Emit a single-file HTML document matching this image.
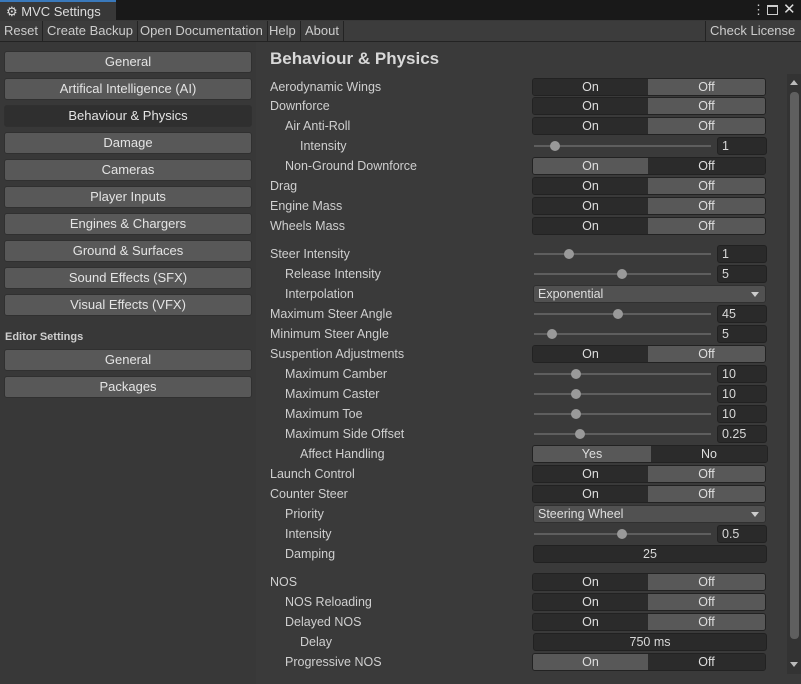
<!DOCTYPE html>
<html><head><meta charset="utf-8"><style>
*{box-sizing:border-box;margin:0;padding:0}
body{width:801px;height:684px;background:#383838;font-family:"Liberation Sans",sans-serif;font-size:12px;color:#d2d2d2;position:relative;overflow:hidden}
.a{position:absolute}
.tb{left:0;top:0;width:801px;height:20px;background:#191919}
.tab{left:0;top:0;width:116px;height:21px;background:#383838;border-top:2px solid #3a79bb;font-size:13px;color:#ddd;padding:2px 0 0 6px}
.menu{left:0;top:21px;width:801px;height:21px;background:#3c3c3c;border-bottom:1px solid #232323}
.mi{position:absolute;top:0;height:20px;line-height:20px;font-size:13px;color:#ccc;border-right:1px solid #232323;padding:0 4px}
.lb{position:absolute;left:4px;width:248px;height:22px;background:#585858;border:1px solid #303030;border-radius:3px;text-align:center;line-height:20px;font-size:13px;color:#e4e4e4}
.lb.sel{background:#2f2f2f}
.lab{position:absolute;height:20px;line-height:20px;font-size:12.5px;color:#cfcfcf}
.tg{position:absolute;left:532px;width:234px;height:18px;border:1px solid #222;border-radius:3px;overflow:hidden;display:flex}
.tg div{height:16px;line-height:16px;text-align:center;font-size:12.5px;color:#dedede}
.d{background:#2b2b2b}.l{background:#585858}
.tr{position:absolute;left:534px;width:177px;height:2px;background:#5e5e5e}
.hd{position:absolute;width:10px;height:10px;border-radius:5px;background:#999}
.fd{position:absolute;left:717px;width:50px;height:18px;background:#2a2a2a;border:1px solid #212121;border-radius:3px;line-height:16px;padding-left:4px;font-size:12.5px;color:#d8d8d8}
.dd{position:absolute;left:533px;width:233px;height:18px;background:#515151;border:1px solid #303030;border-radius:3px;line-height:16px;padding-left:4px;font-size:12.5px;color:#dedede}
.dd:after{content:"";position:absolute;right:6px;top:6px;border-left:4px solid transparent;border-right:4px solid transparent;border-top:5px solid #ccc}
.wf{position:absolute;left:533px;width:234px;height:18px;background:#2a2a2a;border:1px solid #212121;border-radius:3px;text-align:center;line-height:16px;font-size:12.5px;color:#d8d8d8}
</style></head><body>
<div class="a tb"></div>
<div class="a tab">⚙ MVC Settings</div>
<div class="a" style="left:752px;top:2px;color:#ccc;font-size:13px">⋮</div>
<div class="a" style="left:767px;top:5px;width:11px;height:10px;border:1px solid #ccc;border-top-width:2px"></div>
<div class="a" style="left:783px;top:0px;color:#ddd;font-size:15px">✕</div>
<div class="a menu">
<div class="mi" style="left:0">Reset</div>
<div class="mi" style="left:43px">Create Backup</div>
<div class="mi" style="left:136px">Open Documentation</div>
<div class="mi" style="left:265px">Help</div>
<div class="mi" style="left:301px">About</div>
<div class="mi" style="left:705px;border-left:1px solid #232323;border-right:none">Check License</div>
</div>
<div class="a" style="left:256px;top:42px;width:545px;height:642px;background:#3a3a3a"></div>

<div class="lb" style="top:51px">General</div>
<div class="lb" style="top:78px">Artifical Intelligence (AI)</div>
<div class="lb sel" style="top:105px">Behaviour &amp; Physics</div>
<div class="lb" style="top:132px">Damage</div>
<div class="lb" style="top:159px">Cameras</div>
<div class="lb" style="top:186px">Player Inputs</div>
<div class="lb" style="top:213px">Engines &amp; Chargers</div>
<div class="lb" style="top:240px">Ground &amp; Surfaces</div>
<div class="lb" style="top:267px">Sound Effects (SFX)</div>
<div class="lb" style="top:294px">Visual Effects (VFX)</div>
<div class="a" style="left:5px;top:331px;font-size:11px;font-weight:bold;color:#cfcfcf">Editor Settings</div>
<div class="lb" style="top:349px">General</div>
<div class="lb" style="top:376px">Packages</div>

<div class="a" style="left:270px;top:49px;font-size:17px;font-weight:bold;color:#d8d8d8">Behaviour &amp; Physics</div>

<div class="lab" style="left:270px;top:77px">Aerodynamic Wings</div>
<div class="lab" style="left:270px;top:96px">Downforce</div>
<div class="lab" style="left:285px;top:116px">Air Anti-Roll</div>
<div class="lab" style="left:300px;top:136px">Intensity</div>
<div class="lab" style="left:285px;top:156px">Non-Ground Downforce</div>
<div class="lab" style="left:270px;top:176px">Drag</div>
<div class="lab" style="left:270px;top:196px">Engine Mass</div>
<div class="lab" style="left:270px;top:216px">Wheels Mass</div>
<div class="lab" style="left:270px;top:244px">Steer Intensity</div>
<div class="lab" style="left:285px;top:264px">Release Intensity</div>
<div class="lab" style="left:285px;top:284px">Interpolation</div>
<div class="lab" style="left:270px;top:304px">Maximum Steer Angle</div>
<div class="lab" style="left:270px;top:324px">Minimum Steer Angle</div>
<div class="lab" style="left:270px;top:344px">Suspention Adjustments</div>
<div class="lab" style="left:285px;top:364px">Maximum Camber</div>
<div class="lab" style="left:285px;top:384px">Maximum Caster</div>
<div class="lab" style="left:285px;top:404px">Maximum Toe</div>
<div class="lab" style="left:285px;top:424px">Maximum Side Offset</div>
<div class="lab" style="left:300px;top:444px">Affect Handling</div>
<div class="lab" style="left:270px;top:464px">Launch Control</div>
<div class="lab" style="left:270px;top:484px">Counter Steer</div>
<div class="lab" style="left:285px;top:504px">Priority</div>
<div class="lab" style="left:285px;top:524px">Intensity</div>
<div class="lab" style="left:285px;top:544px">Damping</div>
<div class="lab" style="left:270px;top:572px">NOS</div>
<div class="lab" style="left:285px;top:592px">NOS Reloading</div>
<div class="lab" style="left:285px;top:612px">Delayed NOS</div>
<div class="lab" style="left:300px;top:632px">Delay</div>
<div class="lab" style="left:285px;top:652px">Progressive NOS</div>

<div class="tg" style="top:78px"><div class="d" style="width:115px">On</div><div class="l" style="flex:1">Off</div></div>
<div class="tg" style="top:97px"><div class="d" style="width:115px">On</div><div class="l" style="flex:1">Off</div></div>
<div class="tg" style="top:117px"><div class="d" style="width:115px">On</div><div class="l" style="flex:1">Off</div></div>
<div class="tr" style="top:145px"></div><div class="hd" style="left:550px;top:141px"></div><div class="fd" style="top:137px">1</div>
<div class="tg" style="top:157px"><div class="l" style="width:115px">On</div><div class="d" style="flex:1">Off</div></div>
<div class="tg" style="top:177px"><div class="d" style="width:115px">On</div><div class="l" style="flex:1">Off</div></div>
<div class="tg" style="top:197px"><div class="d" style="width:115px">On</div><div class="l" style="flex:1">Off</div></div>
<div class="tg" style="top:217px"><div class="d" style="width:115px">On</div><div class="l" style="flex:1">Off</div></div>

<div class="tr" style="top:253px"></div><div class="hd" style="left:564px;top:249px"></div><div class="fd" style="top:245px">1</div>
<div class="tr" style="top:273px"></div><div class="hd" style="left:617px;top:269px"></div><div class="fd" style="top:265px">5</div>
<div class="dd" style="top:285px">Exponential</div>
<div class="tr" style="top:313px"></div><div class="hd" style="left:613px;top:309px"></div><div class="fd" style="top:305px">45</div>
<div class="tr" style="top:333px"></div><div class="hd" style="left:547px;top:329px"></div><div class="fd" style="top:325px">5</div>
<div class="tg" style="top:345px"><div class="d" style="width:115px">On</div><div class="l" style="flex:1">Off</div></div>
<div class="tr" style="top:373px"></div><div class="hd" style="left:571px;top:369px"></div><div class="fd" style="top:365px">10</div>
<div class="tr" style="top:393px"></div><div class="hd" style="left:571px;top:389px"></div><div class="fd" style="top:385px">10</div>
<div class="tr" style="top:413px"></div><div class="hd" style="left:571px;top:409px"></div><div class="fd" style="top:405px">10</div>
<div class="tr" style="top:433px"></div><div class="hd" style="left:575px;top:429px"></div><div class="fd" style="top:425px">0.25</div>
<div class="tg" style="top:445px;width:236px"><div class="l" style="width:118px">Yes</div><div class="d" style="flex:1">No</div></div>
<div class="tg" style="top:465px"><div class="d" style="width:115px">On</div><div class="l" style="flex:1">Off</div></div>
<div class="tg" style="top:485px"><div class="d" style="width:115px">On</div><div class="l" style="flex:1">Off</div></div>
<div class="dd" style="top:505px">Steering Wheel</div>
<div class="tr" style="top:533px"></div><div class="hd" style="left:617px;top:529px"></div><div class="fd" style="top:525px">0.5</div>
<div class="wf" style="top:545px">25</div>

<div class="tg" style="top:573px"><div class="d" style="width:115px">On</div><div class="l" style="flex:1">Off</div></div>
<div class="tg" style="top:593px"><div class="d" style="width:115px">On</div><div class="l" style="flex:1">Off</div></div>
<div class="tg" style="top:613px"><div class="d" style="width:115px">On</div><div class="l" style="flex:1">Off</div></div>
<div class="wf" style="top:633px">750 ms</div>
<div class="tg" style="top:653px"><div class="l" style="width:115px">On</div><div class="d" style="flex:1">Off</div></div>

<div class="a" style="left:787px;top:74px;width:14px;height:600px;background:#333"></div>
<div class="a" style="left:790px;top:92px;width:9px;height:547px;background:#5f5f5f;border-radius:4px"></div>
<div class="a" style="left:790px;top:80px;border-left:4px solid transparent;border-right:4px solid transparent;border-bottom:5px solid #bbb"></div>
<div class="a" style="left:790px;top:662px;border-left:4px solid transparent;border-right:4px solid transparent;border-top:5px solid #bbb"></div>
</body></html>
